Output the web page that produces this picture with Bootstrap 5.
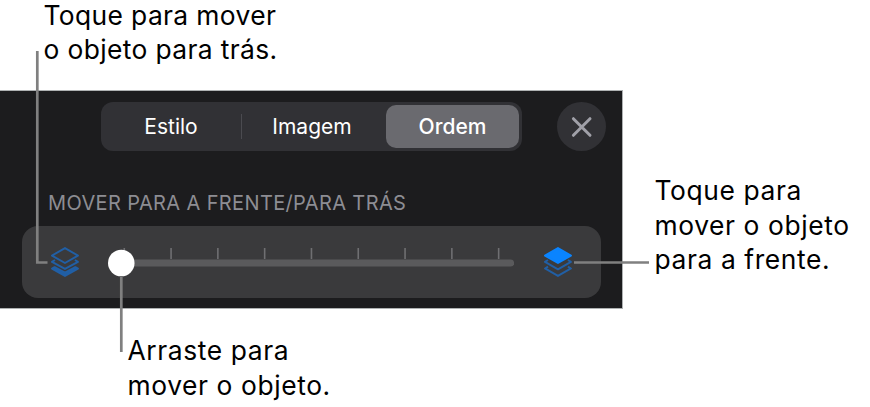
<!DOCTYPE html>
<html lang="pt-BR">
<head>
  <meta charset="UTF-8">
  <meta name="viewport" content="width=device-width, initial-scale=1.0">
  <title>Ordem dos objetos</title>
  <link href="https://cdn.jsdelivr.net/npm/bootstrap@5.3.0/dist/css/bootstrap.min.css" rel="stylesheet">
  <style>
    body {
      background-color: #fff;
      color: #000;
      font-family: Inter, "Liberation Sans", sans-serif;
    }
    .figure-area {
      width: 870px;
      height: 407px;
    }
    .callout {
      font-size: 26.4px;
      line-height: 34.7px;
      letter-spacing: 0.6px;
      white-space: nowrap;
    }
    .callout-top {
      height: 91px;
      padding-left: 43.5px;
      margin-top: -2.4px;
      margin-bottom: 2.4px;
      letter-spacing: 0.37px;
    }
    .callout-right {
      padding: 82px 0 0 32.5px;
    }
    .callout-bottom {
      padding: 25px 0 0 127.5px;
    }
    .format-panel {
      width: 622px;
      height: 217px;
      padding: 11px 16px 0 22px;
      background-color: #1c1c1e;
      box-shadow: 0 0 0 1px #aeb1b2;
    }
    .panel-tabs {
      width: 421px;
      height: 49px;
      margin-left: 79px;
      padding: 3px;
      border-radius: 12px;
      background-color: #313135;
    }
    .panel-tabs .nav-link {
      height: 43px;
      padding: 0;
      border-radius: 10px;
      color: #fff;
      font-size: 21px;
      line-height: 44px;
      text-align: center;
    }
    .panel-tabs .nav-link.active {
      background-color: #6a6a6f;
      font-weight: 500;
    }
    .tab-divider {
      width: 1px;
      height: 25px;
      margin-left: 3px;
      background-color: #4b4b50;
    }
    .close-btn {
      width: 49px;
      height: 49px;
      background-color: #313135;
    }
    .section-label {
      margin: 37px 0 0 26px;
      color: #8d8d93;
      font-size: 20px;
      line-height: 31px;
      letter-spacing: 0.37px;
      white-space: nowrap;
    }
    .order-box {
      width: 579px;
      height: 72px;
      margin-top: 7px;
      padding: 0 28px;
      border-radius: 16px;
      background-color: #3a3a3c;
    }
    .order-slider {
      width: 407px;
      height: 30px;
      margin-left: 28px;
    }
    .order-icon {
      margin-left: 29px;
    }
    .leader-lines {
      pointer-events: none;
    }
  </style>
</head>
<body>
  <div class="figure-area position-relative d-flex flex-column">
    <div class="callout callout-top">Toque para mover<br>o objeto para trás.</div>

    <div class="d-flex align-items-start" style="height: 217px">
      <div class="format-panel flex-shrink-0">
        <div class="d-flex justify-content-between">
          <div class="nav nav-pills panel-tabs d-flex flex-nowrap align-items-center">
            <a class="nav-link" style="width: 134px">Estilo</a>
            <div class="tab-divider"></div>
            <a class="nav-link" style="width: 140px">Imagem</a>
            <a class="nav-link active ms-auto" style="width: 133px">Ordem</a>
          </div>
          <button type="button" class="close-btn btn rounded-circle border-0 p-0 d-flex align-items-center justify-content-center" aria-label="Fechar">
            <svg width="22" height="22" viewBox="0 0 22 22" fill="none" stroke="#a0a0a8" stroke-width="3" stroke-linecap="round">
              <path d="M2.4 2.7L19 19.3M19 2.7L2.4 19.3"/>
            </svg>
          </button>
        </div>

        <div class="section-label">MOVER PARA A FRENTE/PARA TRÁS</div>

        <div class="order-box d-flex align-items-center">
          <!-- Mover para trás -->
          <svg width="30" height="32" viewBox="0 0 30 32" fill="none" stroke="#215fa5" stroke-width="2" stroke-linejoin="round">
            <path d="M2 22.6L4.6 21.2L15 26.6L25.4 21.2L28 22.6L15 30Z" fill="#215fa5"/>
            <path d="M5 14L2 15.9L15 22.9L28 15.9L25 14"/>
            <path d="M15 2L28 9.5L15 17L2 9.5Z" fill="#3a3a3c"/>
          </svg>
          <svg class="order-slider" viewBox="0 0 407 30">
            <path d="M16.3 1V12M63.2 1V12M110.1 1V12M157 1V12M203.9 1V12M250.8 1V12M297.7 1V12M344.6 1V12M391.5 1V12" stroke="#6f6f72" stroke-width="1.6"/>
            <rect x="8" y="12.5" width="399" height="7" rx="3.5" fill="#5a5a5c"/>
            <circle cx="13.3" cy="16" r="13.3" fill="#fff"/>
          </svg>
          <!-- Mover para a frente -->
          <svg class="order-icon" width="30" height="32" viewBox="0 0 30 32" fill="none" stroke="#215fa5" stroke-width="2" stroke-linejoin="round">
            <path d="M5 20.6L2 22.5L15 29.9L28 22.5L25 20.6"/>
            <path d="M5 14L2 15.9L15 23.3L28 15.9L25 14"/>
            <path d="M15 2L28 9.5L15 17L2 9.5Z" fill="#0a84ff" stroke="#0a84ff"/>
          </svg>
        </div>
      </div>

      <div class="callout callout-right">Toque para<br>mover o objeto<br>para a frente.</div>
    </div>

    <div class="callout callout-bottom">Arraste para<br>mover o objeto.</div>

    <!-- Linhas que ligam as legendas aos controles -->
    <svg class="leader-lines position-absolute top-0 start-0" width="870" height="407" viewBox="0 0 870 407" fill="none" stroke="#808080" stroke-width="2.7">
      <path d="M37.3 51V262.5H47.5M121.3 277V352M574 262.5H649"/>
    </svg>
  </div>

  <script src="https://cdn.jsdelivr.net/npm/bootstrap@5.3.0/dist/js/bootstrap.bundle.min.js"></script>
</body>
</html>
